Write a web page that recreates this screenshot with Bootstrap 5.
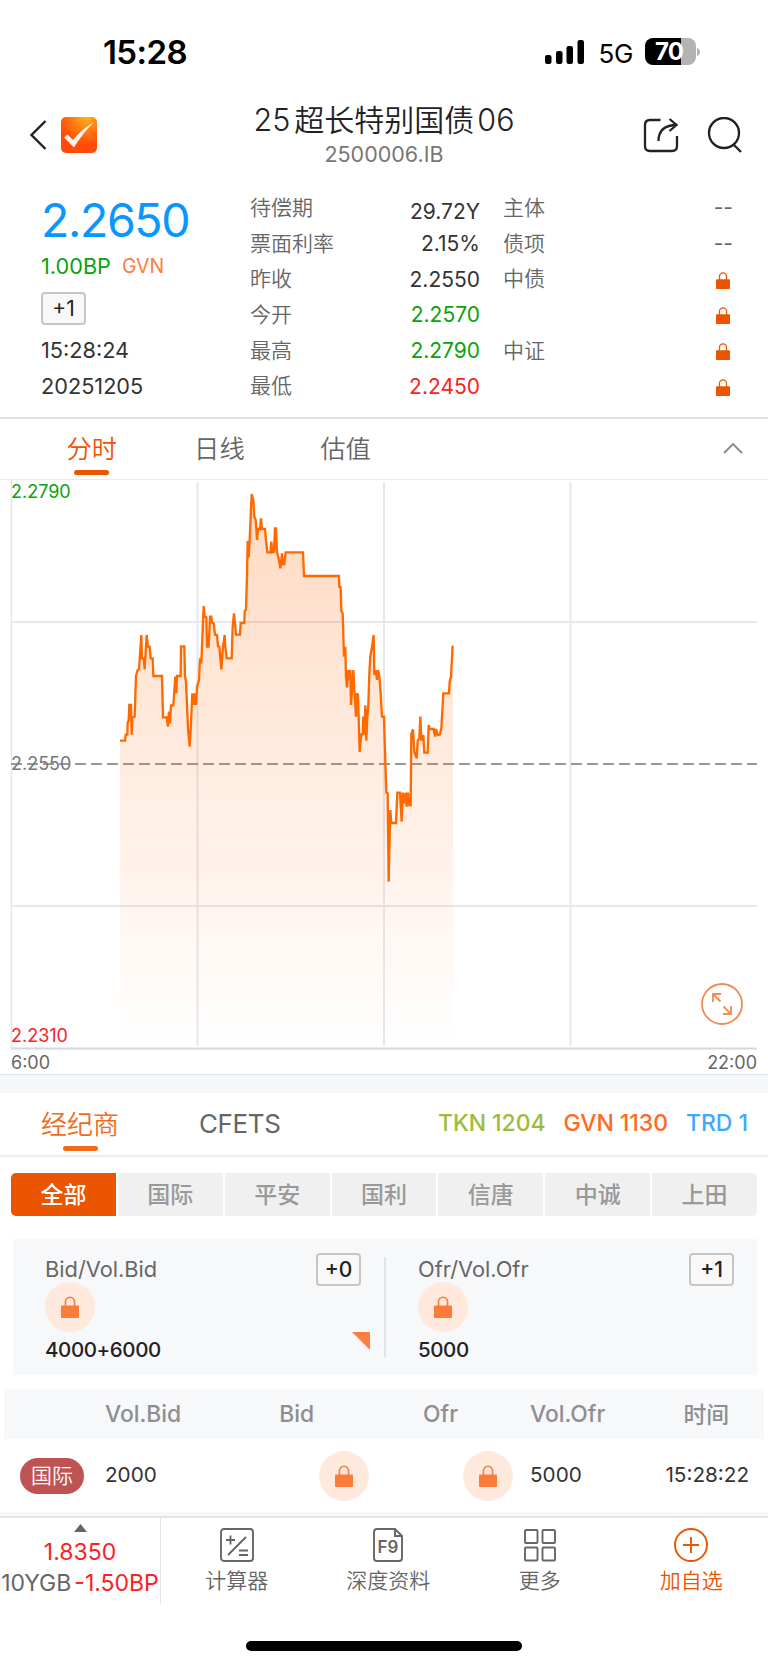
<!DOCTYPE html>
<html lang="zh-CN">
<head>
<meta charset="utf-8">
<meta name="viewport" content="width=device-width, initial-scale=1">
<title>25超长特别国债06</title>
<link href="https://cdn.jsdelivr.net/npm/bootstrap@5.3.0/dist/css/bootstrap.min.css" rel="stylesheet">
<style>
body{font-family:Inter,"Noto Sans CJK SC",sans-serif;font-size:21px;line-height:1;color:#333;background:#fff;width:768px;overflow-x:hidden}
svg{display:block;flex:none}
.zh{font-family:"Noto Sans CJK SC",sans-serif;font-weight:350}
.c-green{color:#0aa30a}.c-red{color:#fa2222}.c-or{color:#eb5500}.c-gray{color:#666}
.status{height:85px;padding:18px 68px 0 103px}
.clock{font-size:33px;font-weight:600;color:#000;letter-spacing:-.6px;padding-top:2px}
.cell{font-size:26px;margin:4px 12px 0 13px;letter-spacing:-.3px}
.batt{width:51px;height:27px;border-radius:8px;background:linear-gradient(90deg,#000 70%,#b3b3b3 70%);color:#fff;font-size:24px;font-weight:700;letter-spacing:-.8px;padding-right:3px}
.topbar{height:95px;padding:4px 25px 0 29px}
.title{font-size:30.500px;line-height:36px;color:#222;font-weight:350;white-space:nowrap;position:relative;left:-1px;top:-1px}
.title .zh{font-size:30px;margin:0 3px 0 4px}
.sub{font-size:21.500px;line-height:30px;color:#777;margin-left:-2px}
.quote{height:239px;border-bottom:2px solid #dedee4;padding:10px 34px 0 41px}
.quote .line{height:35.7px;display:flex;align-items:center}
.quote .zh{margin-top:-1.5px}
.price{font-size:46.500px;color:#0a96ff;letter-spacing:-1.4px;line-height:61px;white-space:nowrap}
.left{font-size:21.700px}
.tick{border:2px solid #c6c6c6;border-radius:4px;background:#f8f8f8;width:45px;height:33px;font-size:21px;color:#222;display:flex;align-items:center;justify-content:center}
.side .tick{font-weight:500;margin-top:-1px}
.tabs{height:61px;border-bottom:1.5px solid #e8e9ee;font-size:25.300px;color:#666;padding-bottom:2px}
.tabs .on:after,.btabs .on:after{content:"";position:absolute;left:50%;margin-left:-17.5px;width:35px;height:5px;border-radius:3px;background:#eb5500}
.tabs .on:after{top:35px}.btabs .on:after{top:36px;background:#f26a1b}
.chart{height:595px;border-bottom:1.5px solid #e0e3ea}
.chart text{font-size:18px;font-family:Inter}
.band{height:18px;background:#f6f7fa}
.btabs{height:64px;border-bottom:2px solid #eee;font-size:26px;padding:0 20px 2px 41px}
.btabs .cf{letter-spacing:-.4px;margin-left:80px;padding-top:2px}
.stat{font-size:23px;font-weight:500;letter-spacing:-.05px;gap:18px;white-space:nowrap;padding-top:1px}
.segs{margin:16px 11px 0;height:43px;gap:2px;border-radius:5px;overflow:hidden;font-size:23px;color:#999}
.segs div{background:#f0f0f0;flex:1;display:flex;align-items:center;justify-content:center;padding-bottom:2px;font-weight:500}
.segs .on{background:#eb5500;color:#fff}
.quotes{margin:23px 11px 0 13px;height:136px;background:#f7f8fa}
.side{padding:15px 24px 0 32px;position:relative}
.side+.side{padding-left:33px;padding-right:23px}
.side+.side:before{content:"";position:absolute;left:-1px;top:18px;height:100px;border-left:2px solid #e2e3e6}
.side .head{height:28px}
.side .head .c-gray{font-size:21.800px;padding-top:5px}
.vol{font-size:20.500px;font-weight:450;margin-top:8px;letter-spacing:-.4px;color:#222}
.cir{width:50px;height:50px;border-radius:50%;background:#ffe8dc;color:#fa7b3a;display:flex;align-items:center;justify-content:center;flex:none}
.corner{position:absolute;right:15px;top:93px}
.cols{display:grid;grid-template-columns:101px 108px 144px 144px 100px 1fr;align-items:center}
.thead{margin:14px 4px 0;height:50px;background:#f7f8fa;color:#8e8e93;font-size:22.800px;font-weight:500}
.trow{height:73px;margin:0 4px;font-size:20.700px}
.pill{width:64px;height:36px;border-radius:18px;background:#be5353;color:#fff;margin-left:16px;padding-bottom:2px;font-size:21px}
.gapline{height:6px;background:#f7f7f8;border-bottom:2px solid #e2e4e7}
.dock{height:86px}
.index{width:161px;border-right:1.5px solid #e4e4e6;font-size:23px}
.dock .it{width:151.5px;padding-top:10px}
.dock .it div{margin-top:7px}
.home{width:276px;height:10px;border-radius:5px;background:#000;margin:37px auto 0}
</style>
</head>
<body>
<svg width="0" height="0" class="position-absolute"><defs>
<symbol id="lock" viewBox="0 0 14 17"><path d="M3.500 8V4.400a3.500 3.500 0 0 1 7 0V8" fill="none" stroke="currentColor" stroke-width="1.300"/><rect y="7.300" width="14" height="9.700" rx=".8" fill="currentColor"/></symbol>
</defs></svg>

<header>
<div class="status d-flex align-items-center justify-content-between">
<div class="clock">15:28</div>
<div class="d-flex align-items-center">
<svg width="40" height="24" viewBox="0 0 40 24"><rect y="15" width="6.500" height="9" rx="2.2"/><rect x="11" y="11" width="6.500" height="13" rx="2.2"/><rect x="21.500" y="6" width="6.500" height="18" rx="2.2"/><rect x="32.500" width="6.500" height="24" rx="2.2"/></svg>
<span class="text-black cell">5G</span>
<div class="batt d-flex align-items-center justify-content-center">70</div>
<svg width="4" height="10"><path d="M1 1q3 1 3 4t-3 4z" fill="#b3b3b3"/></svg>
</div></div>
<div class="topbar d-flex align-items-center justify-content-between">
<div class="d-flex align-items-center" style="width:98px">
<svg width="32" height="34" viewBox="0 0 32 34"><path d="M16.500 3 2.500 17l14 14" fill="none" stroke="#222" stroke-width="2.400"/></svg>
<svg width="36" height="36" viewBox="0 0 36 36"><defs><radialGradient id="lg" cx=".7" cy="0" r=".8"><stop offset="0" stop-color="#ffb619"/><stop offset=".5" stop-color="#ff7a10"/><stop offset="1" stop-color="#ff4a08"/></radialGradient></defs><rect width="36" height="36" rx="5" fill="url(#lg)"/><path d="M3 20.500 6.500 17.500 12 23Q21 12 33 5 21 17 13 30.500Z" fill="#fff2ec"/></svg>
</div>
<div class="text-center"><div class="title">25<span class="zh">超长特别国债</span>06</div><div class="sub">2500006.IB</div></div>
<div class="d-flex align-items-center" style="gap:28px">
<svg width="36" height="36" viewBox="0 0 36 36" fill="none" stroke="#222" stroke-width="2.300"><path d="M17.500 3H7Q2 3 2 8v21q0 5 5 5h22q5 0 5-5V19"/><path d="M15.500 24C15.500 14 21 8 34 8M26.500 2l7 6-7 6"/></svg>
<svg width="36" height="36" viewBox="0 0 36 36" fill="none" stroke="#222" stroke-width="2.300"><circle cx="17" cy="16" r="15"/><path d="m26 27 8 8"/></svg>
</div></div>
</header>

<section class="quote d-flex">
<div class="left" style="width:209px">
<div class="price">2.2650</div>
<div class="d-flex align-items-center" style="height:31px"><span class="c-green">1.00BP</span><span style="font-size:19.500px;color:#ff7d40;margin-left:11px">GVN</span></div>
<div class="tick" style="margin:10px 0 8px">+1</div>
<div class="line">15:28:24</div><div class="line">20251205</div>
</div>
<div class="zh c-gray" style="width:110px"><div class="line">待偿期</div><div class="line">票面利率</div><div class="line">昨收</div><div class="line">今开</div><div class="line">最高</div><div class="line">最低</div></div>
<div style="width:120px"><div class="line justify-content-end pt-2">29.72Y</div><div class="line justify-content-end">2.15%</div><div class="line justify-content-end">2.2550</div><div class="line justify-content-end c-green">2.2570</div><div class="line justify-content-end c-green">2.2790</div><div class="line justify-content-end c-red">2.2450</div></div>
<div class="zh c-gray" style="margin-left:23px"><div class="line">主体</div><div class="line">债项</div><div class="line">中债</div><div class="line"></div><div class="line">中证</div></div>
<div class="ms-auto c-or" style="padding-right:1px"><div class="line c-gray">--</div><div class="line c-gray">--</div>
<div class="line justify-content-center" style="padding-top:2px"><svg width="14" height="17"><use href="#lock"/></svg></div><div class="line justify-content-center" style="padding-top:2px"><svg width="14" height="17"><use href="#lock"/></svg></div><div class="line justify-content-center" style="padding-top:2px"><svg width="14" height="17"><use href="#lock"/></svg></div><div class="line justify-content-center" style="padding-top:2px"><svg width="14" height="17"><use href="#lock"/></svg></div></div>
</section>

<nav class="tabs zh d-flex align-items-center">
<div class="on c-or position-relative" style="margin-left:66.500px">分时</div><div style="margin-left:77px">日线</div><div style="margin-left:75.500px">估值</div>
<svg class="ms-auto" style="margin-right:25px" width="20" height="12" viewBox="0 0 20 12"><path d="m1 11 9-9 9 9" fill="none" stroke="#8a8a8f" stroke-width="1.800"/></svg>
</nav>

<section class="chart">
<svg width="768" height="592" viewBox="0 0 768 592">
<defs><linearGradient id="area" x1="0" y1="0" x2="0" y2="1"><stop offset="0" stop-color="#ff6a0a" stop-opacity=".25"/><stop offset="1" stop-color="#ff6a0a" stop-opacity="0"/></linearGradient></defs>
<g stroke="#e6e8ee" stroke-width="2" fill="none"><path d="M11.500 0V569" stroke-width="1.500"/><path d="M197.500 2V566M384 2V566M570.500 2V566M11 142H757M11 426H757"/><path d="M11 568.500H757" stroke="#d6d7dd"/></g>
<path d="M11 284H757" stroke="#999" stroke-width="2" stroke-dasharray="11 5"/>
<g transform="translate(100 0) scale(.33333)">
<path id="fillp" fill="url(#area)"/>
<path id="linep" fill="none" stroke="#ff6900" stroke-width="7" stroke-linejoin="miter" stroke-miterlimit="3"/>
</g>
<text x="11" y="17.500" fill="#0aa30a">2.2790</text>
<text x="11" y="290" fill="#777">2.2550</text>
<text x="11" y="561.500" fill="#fa2222">2.2310</text>
<text x="11" y="588.500" fill="#666">6:00</text><text x="757" y="588.500" fill="#666" text-anchor="end">22:00</text>
<g fill="none" stroke="#f28a55" stroke-width="1.800"><circle cx="722" cy="524" r="20"/><path d="M713 522v-8h8M713.500 514.500l7 7M731 526v8h-8M730.500 533.500l-7-7"/></g>
</svg>
</section>
<div class="band"></div>

<nav class="btabs d-flex align-items-center">
<div class="zh on position-relative" style="color:#f26a1b">经纪商</div><div class="c-gray cf">CFETS</div>
<div class="ms-auto d-flex stat"><span style="color:#9dbc3c">TKN 1204</span><span style="color:#ff6a20">GVN 1130</span><span style="color:#3fa9ff">TRD 1</span></div>
</nav>

<div class="segs zh d-flex"><div class="on">全部</div><div>国际</div><div>平安</div><div>国利</div><div>信唐</div><div>中诚</div><div>上田</div></div>

<section class="quotes d-flex">
<div class="side" style="width:372px"><div class="d-flex justify-content-between head"><span class="c-gray">Bid/Vol.Bid</span><span class="tick">+0</span></div>
<div class="cir"><svg width="18" height="22"><use href="#lock"/></svg></div><div class="vol">4000+6000</div>
<svg class="corner" width="18" height="18"><path d="M0 0H18V18Z" fill="#ff7d40"/></svg></div>
<div class="side flex-fill"><div class="d-flex justify-content-between head"><span class="c-gray">Ofr/Vol.Ofr</span><span class="tick">+1</span></div>
<div class="cir"><svg width="18" height="22"><use href="#lock"/></svg></div><div class="vol">5000</div></div>
</section>

<div class="cols thead"><span>&nbsp;</span><span>Vol.Bid</span><span class="text-end" style="padding-right:43px">Bid</span><span class="text-end" style="padding-right:43px">Ofr</span><span style="margin-left:29px">Vol.Ofr</span><span class="zh text-end" style="padding-right:35px;font-weight:500">时间</span></div>
<div class="cols trow"><span class="pill zh d-flex align-items-center justify-content-center">国际</span><span>2000</span><span class="cir" style="margin-left:106px"><svg width="18" height="22"><use href="#lock"/></svg></span><span class="cir" style="margin-left:106px"><svg width="18" height="22"><use href="#lock"/></svg></span><span style="margin-left:29px">5000</span><span class="text-end" style="padding-right:15px">15:28:22</span></div>
<div class="gapline"></div>

<footer>
<div class="dock d-flex">
<div class="index text-center c-red"><svg class="mx-auto" style="margin-top:6px" width="13" height="8"><path d="M0 8 6.500 0 13 8Z" fill="#666"/></svg><div style="margin-top:9px">1.8350</div><div class="text-nowrap" style="margin-top:8px"><span class="c-gray" style="margin-right:3px">10YGB</span>-1.50BP</div></div>
<div class="it text-center zh c-gray"><svg class="mx-auto" width="34" height="34" viewBox="0 0 34 34" fill="none" stroke="#666" stroke-width="1.900"><rect x="1" y="1" width="32" height="32" rx="3"/><path d="M6 12h9M10.500 7.500v9M8 27 26 9M19 22.500h9M19 27h9"/></svg><div>计算器</div></div>
<div class="it text-center zh c-gray"><svg class="mx-auto" width="30" height="34" viewBox="0 0 30 34" fill="none" stroke="#666" stroke-width="1.900"><path d="M22 1H4Q1 1 1 4v26q0 3 3 3h22q3 0 3-3V8ZM22 1v7h7"/><text x="15" y="25" font-family="Inter" font-size="17" font-weight="600" text-anchor="middle" fill="#666" stroke="none">F9</text></svg><div>深度资料</div></div>
<div class="it text-center zh c-gray"><svg class="mx-auto" width="34" height="34" viewBox="0 0 34 34" fill="none" stroke="#666" stroke-width="1.900"><rect x="2" y="2" width="12.500" height="13" rx="1"/><rect x="19.500" y="2" width="12.500" height="13" rx="1"/><rect x="2" y="19.500" width="12.500" height="13" rx="1"/><rect x="19.500" y="19.500" width="12.500" height="13" rx="1"/></svg><div>更多</div></div>
<div class="it text-center zh c-or"><svg class="mx-auto" width="34" height="34" viewBox="0 0 34 34" fill="none" stroke="#eb5500" stroke-width="1.900"><circle cx="17" cy="17" r="16"/><path d="M9 17h16M17 9v16"/></svg><div>加自选</div></div>
</div>
<div class="home"></div>
</footer>
<script src="https://cdn.jsdelivr.net/npm/bootstrap@5.3.0/dist/js/bootstrap.bundle.min.js"></script>
<script>
// Intraday yields as x,y pairs in chart units (three per pixel)
const pts="60,782 75,782 77,764 82,764 83,728 86,722 88,675 93,675 95,764 97,712 104,710 108,588 113,570 117,568 124,465 126,535 131,535 134,568 140,465 144,500 149,500 152,535 158,535 160,588 186,588 189,712 200,712 204,740 207,695 210,730 213,676 220,676 226,590 229,640 231,588 242,588 243,499 253,499 255,590 258,605 264,745 269,800 273,730 277,640 280,675 283,640 288,675 291,620 297,600 300,535 304,550 306,500 311,378 314,410 319,412 321,500 326,500 330,410 334,410 336,428 341,430 345,464 351,465 354,499 358,500 364,568 369,500 374,465 376,500 380,535 395,535 398,440 402,400 405,430 408,464 420,464 422,429 433,429 434,393 438,390 441,290 443,183 446,232 449,180 455,42 460,60 463,110 467,120 469,147 471,180 474,147 480,147 483,115 486,147 495,147 498,182 502,217 511,217 514,185 517,217 522,215 525,145 528,145 531,217 536,235 541,265 546,220 548,252 553,252 557,217 609,217 612,288 717,288 718,320 722,322 724,393 728,400 732,530 736,500 738,590 741,622 745,570 747,600 751,570 753,675 760,570 764,645 768,710 771,640 774,645 779,816 784,763 788,763 790,710 793,763 796,676 799,782 802,710 805,676 808,580 811,530 816,500 821,465 823,585 828,570 831,600 834,570 838,588 842,640 846,710 852,710 854,780 859,938 863,940 866,1205 871,990 874,1029 888,1029 892,938 900,938 905,1025 908,938 914,970 917,938 920,980 924,938 928,976 932,976 934,762 939,748 943,815 950,835 953,782 958,775 961,710 964,782 970,765 973,818 983,818 986,735 990,747 1001,747 1005,770 1008,747 1013,765 1020,763 1024,745 1030,640 1047,640 1049,605 1053,590 1058,497";
document.getElementById("linep").setAttribute("d","M"+pts);
document.getElementById("fillp").setAttribute("d","M"+pts+" 1060,1700 60,1700Z");
</script>
</body>
</html>
